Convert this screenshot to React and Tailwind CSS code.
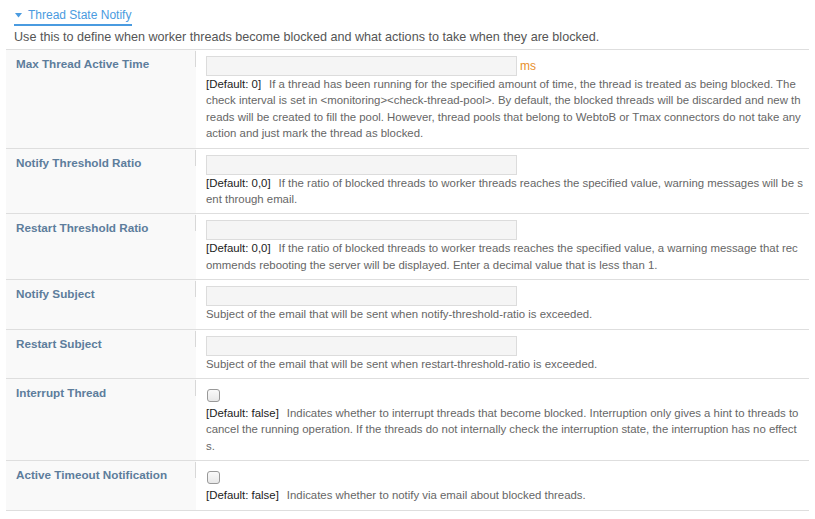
import React from 'react';

const rows = [
  {
    label: 'Max Thread Active Time',
    type: 'input',
    unit: 'ms',
    def: '[Default: 0]',
    text: 'If a thread has been running for the specified amount of time, the thread is treated as being blocked. The check interval is set in <monitoring><check-thread-pool>. By default, the blocked threads will be discarded and new threads will be created to fill the pool. However, thread pools that belong to WebtoB or Tmax connectors do not take any action and just mark the thread as blocked.',
  },
  {
    label: 'Notify Threshold Ratio',
    type: 'input',
    def: '[Default: 0,0]',
    text: 'If the ratio of blocked threads to worker threads reaches the specified value, warning messages will be sent through email.',
  },
  {
    label: 'Restart Threshold Ratio',
    type: 'input',
    def: '[Default: 0,0]',
    text: 'If the ratio of blocked threads to worker treads reaches the specified value, a warning message that recommends rebooting the server will be displayed. Enter a decimal value that is less than 1.',
  },
  {
    label: 'Notify Subject',
    type: 'input',
    text: 'Subject of the email that will be sent when notify-threshold-ratio is exceeded.',
  },
  {
    label: 'Restart Subject',
    type: 'input',
    text: 'Subject of the email that will be sent when restart-threshold-ratio is exceeded.',
  },
  {
    label: 'Interrupt Thread',
    type: 'check',
    def: '[Default: false]',
    text: 'Indicates whether to interrupt threads that become blocked. Interruption only gives a hint to threads to cancel the running operation. If the threads do not internally check the interruption state, the interruption has no effects.',
  },
  {
    label: 'Active Timeout Notification',
    type: 'check',
    def: '[Default: false]',
    text: 'Indicates whether to notify via email about blocked threads.',
  },
];

export default function App() {
  return (
    <div className="min-h-screen bg-white font-['Liberation_Sans',Arial,sans-serif] text-[12px]">
      <div className="px-[14px] pt-[5px]">
        <div className="inline-flex items-center gap-[6px] pl-[1px] pr-[1px] pb-[1px] border-b-2 border-[#4a9be0]">
          <svg width="7" height="5" viewBox="0 0 7 5" className="mt-[1px]">
            <polygon points="0,0 7,0 3.5,4.5" fill="#4a9be0" />
          </svg>
          <span className="text-[#4a9be0] text-[12px] leading-[16px]">Thread State Notify</span>
        </div>
        <p className="text-[#555] text-[12.6px] leading-[16px] mt-[3px]">
          Use this to define when worker threads become blocked and what actions to take when they are blocked.
        </p>
      </div>

      <div className="mx-[6px] mt-[4px] border-t border-[#dedede]">
        {rows.map((r) => (
          <div key={r.label} className="flex border-b border-[#dedede]">
            <div className="w-[190px] shrink-0 bg-[#f9f9f9] relative pl-[10px] pt-[5px]">
              <span className="font-bold text-[11.7px] text-[#5d7d9c] leading-[16px]">{r.label}</span>
              <span className="absolute right-0 top-[1px] h-[16px] w-px bg-[#d8d8d8]" />
            </div>
            <div className="flex-1 pl-[10px] pr-[5px] pt-[6px] pb-[6px]">
              {r.type === 'input' ? (
                <div className="flex items-center">
                  <div className="w-[311px] h-[20px] bg-[#f5f5f5] border border-[#dcdcdc]" />
                  {r.unit && <span className="ml-[3px] text-[#e8902a] leading-[16px]">{r.unit}</span>}
                </div>
              ) : (
                <div className="pt-[4px] pb-[3px]">
                  <div className="ml-[1px] w-[13px] h-[13px] rounded-[3px] border border-[#999] bg-gradient-to-b from-[#fafafa] to-[#e8e8e8]" />
                </div>
              )}
              <p className="text-[#666] text-[11.4px] leading-[16.4px] break-all">
                {r.def && <span className="text-[#222] mr-[8px]">{r.def}</span>}
                {r.text}
              </p>
            </div>
          </div>
        ))}
      </div>
    </div>
  );
}
